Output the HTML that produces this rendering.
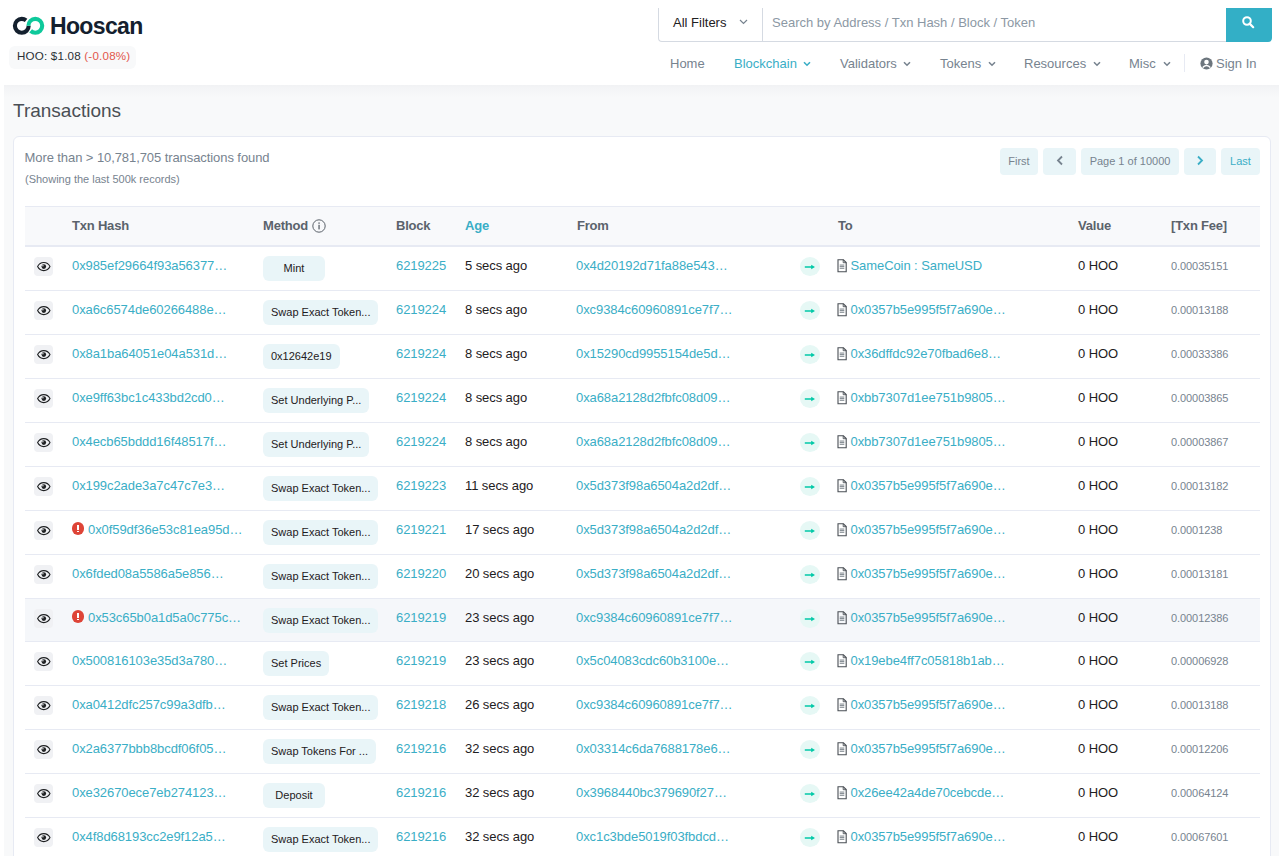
<!DOCTYPE html>
<html><head><meta charset="utf-8">
<style>
*{box-sizing:border-box;margin:0;padding:0}
html,body{width:1287px;height:856px;overflow:hidden;background:#fff}
body{font-family:"Liberation Sans",sans-serif;font-size:13px;color:#1e2022;position:relative}
.abs{position:absolute;white-space:nowrap}
.nav{position:absolute;top:55px;font-size:13px;color:#77838f;line-height:18px;white-space:nowrap}
.chev{display:inline-block;vertical-align:middle}
#main{position:absolute;left:4px;top:85px;width:1275px;height:771px;background:linear-gradient(#f1f2f4 0px,#f3f4f6 3px,#f8f9fa 12px)}
#card{position:absolute;left:13px;top:136px;width:1258px;height:740px;background:#fff;border:1px solid #e7eaf3;border-radius:6px}
.pg{position:absolute;top:147.5px;height:27.5px;background:#e9f5f8;border-radius:4px;font-size:11px;line-height:27px;text-align:center;color:#77838f}
.pg.a{color:#3aaec6}
#thead{position:absolute;left:25px;top:206px;width:1235px;height:41px;background:#f8f9fb;border-top:1px solid #e7eaf3;border-bottom:2px solid #e7eaf3}
.th{position:absolute;top:11px;font-weight:bold;font-size:13px;line-height:16px;color:#5b636c;letter-spacing:-0.2px}
.row{position:absolute;left:25px;width:1235px;height:44px;border-bottom:1px solid #e7eaf3}
.row.hov{background:#f5f7fa}
.c{position:absolute;top:10px;line-height:18px;font-size:13px;white-space:nowrap;letter-spacing:-0.08px}
.lnk{color:#3aaec6}
.eye{position:absolute;left:9px;top:10px;width:19px;height:19px;border-radius:4px;background:#f0f1f4}
.eye svg{position:absolute;left:2.6px;top:5px}
.bdg{position:absolute;left:238px;top:9px;height:25px;min-width:62px;text-align:center;background:#e9f5f8;border-radius:6px;font-size:11px;line-height:25px;padding:0 8px;color:#1e2022}
.arr{position:absolute;left:775px;top:10px;width:20px;height:19px;border-radius:50%;background:#e6f8f5}
.arr svg{position:absolute;left:4px;top:5.6px}
.file{position:absolute;left:812px;top:12px}
.fee{font-size:11px;color:#77838f;top:9.6px}
.err{position:absolute;left:46.5px;top:11px;width:12.8px;height:12.8px;border-radius:50%;background:#de4437}
.err:before{content:"";position:absolute;left:5.3px;top:2.7px;width:2.2px;height:5.8px;background:#fff}
.err:after{content:"";position:absolute;left:5.3px;top:9px;width:2.2px;height:1.4px;background:#fff}
</style></head>
<body>
<!-- logo -->
<svg class="abs" style="left:10px;top:14px" width="38" height="24" viewBox="10 14 38 24">
  <circle cx="21.8" cy="25.8" r="6.9" fill="none" stroke="#14202e" stroke-width="4.1" stroke-dasharray="36.9 100" transform="rotate(0 21.8 25.8)"/>
  <circle cx="35.3" cy="25.8" r="6.9" fill="none" stroke="#0ec99b" stroke-width="4.1" stroke-dasharray="37.4 100" transform="rotate(180 35.3 25.8)"/>
</svg>
<div class="abs" style="left:50px;top:13px;font-size:23px;font-weight:bold;color:#14202e;line-height:26px;letter-spacing:-0.65px">Hooscan</div>
<div class="abs" style="left:9px;top:46px;width:127px;height:23px;background:#f8f9fa;border-radius:6px"></div>
<div class="abs" style="left:17px;top:47px;font-size:11.6px;line-height:18px;color:#2a2f35;letter-spacing:0.2px">HOO: $1.08 <span style="color:#e2574c">(-0.08%)</span></div>

<!-- search -->
<div class="abs" style="left:658px;top:8px;width:570px;height:34px;border-left:1px solid #d5dae2;border-bottom:1px solid #d5dae2;border-bottom-left-radius:4px"></div>
<div class="abs" style="left:762px;top:8px;width:1px;height:33px;background:#d5dae2"></div>
<div class="abs" style="left:673px;top:14px;font-size:13px;line-height:18px;color:#1e2022">All Filters</div>
<svg class="abs" style="left:739px;top:19px" width="9" height="6" viewBox="0 0 9 6"><path d="M1 1l3.5 3.5L8 1" fill="none" stroke="#77838f" stroke-width="1.2"/></svg>
<div class="abs" style="left:772px;top:14px;font-size:13px;line-height:18px;color:#8c98a4">Search by Address / Txn Hash / Block / Token</div>
<div class="abs" style="left:1226px;top:8px;width:46px;height:34px;background:#33afc6;border-radius:0 0 4px 0"></div>
<svg class="abs" style="left:1241px;top:15px" width="14" height="14" viewBox="0 0 14 14"><circle cx="6" cy="6" r="3.8" fill="none" stroke="#fff" stroke-width="2"/><path d="M8.6 8.6L12.2 12.2" stroke="#fff" stroke-width="2.2" stroke-linecap="round"/></svg>

<!-- nav -->
<div class="nav" style="left:670px">Home</div>
<div class="nav" style="left:734px;color:#3aaec6">Blockchain</div>
<svg class="abs" style="left:803px;top:60.8px" width="8" height="6" viewBox="0 0 8 6"><path d="M1 1.2l3 3 3-3" fill="none" stroke="#3aaec6" stroke-width="1.6"/></svg>
<div class="nav" style="left:840px">Validators</div>
<svg class="abs" style="left:903px;top:60.8px" width="8" height="6" viewBox="0 0 8 6"><path d="M1 1.2l3 3 3-3" fill="none" stroke="#77838f" stroke-width="1.6"/></svg>
<div class="nav" style="left:940px">Tokens</div>
<svg class="abs" style="left:988px;top:60.8px" width="8" height="6" viewBox="0 0 8 6"><path d="M1 1.2l3 3 3-3" fill="none" stroke="#77838f" stroke-width="1.6"/></svg>
<div class="nav" style="left:1024px">Resources</div>
<svg class="abs" style="left:1093px;top:60.8px" width="8" height="6" viewBox="0 0 8 6"><path d="M1 1.2l3 3 3-3" fill="none" stroke="#77838f" stroke-width="1.6"/></svg>
<div class="nav" style="left:1129px">Misc</div>
<svg class="abs" style="left:1163px;top:60.8px" width="8" height="6" viewBox="0 0 8 6"><path d="M1 1.2l3 3 3-3" fill="none" stroke="#77838f" stroke-width="1.6"/></svg>
<div class="abs" style="left:1184px;top:54px;width:1px;height:18px;background:#e7eaf3"></div>
<svg class="abs" style="left:1200px;top:56.5px" width="13" height="13" viewBox="0 0 13 13"><circle cx="6.5" cy="6.5" r="6.1" fill="#6c757d"/><circle cx="6.5" cy="5.1" r="2.3" fill="#fff"/><path d="M2.7 10.6c1-1.5 2.3-2.2 3.8-2.2s2.8.7 3.8 2.2" fill="none" stroke="#fff" stroke-width="1.5"/></svg>
<div class="nav" style="left:1216px">Sign In</div>

<!-- main -->
<div id="main"></div>
<div class="abs" style="left:13px;top:99px;font-size:19px;line-height:24px;color:#4a4f55">Transactions</div>
<div id="card"></div>
<div class="abs" style="left:24.5px;top:149px;font-size:13px;line-height:18px;color:#77838f;letter-spacing:-0.08px">More than &gt; 10,781,705 transactions found</div>
<div class="abs" style="left:25px;top:171px;font-size:11px;line-height:16px;color:#77838f">(Showing the last 500k records)</div>

<div class="pg" style="left:1000px;width:38px">First</div>
<div class="pg" style="left:1043px;width:33px"><svg width="8" height="11" viewBox="0 0 8 11" style="vertical-align:-1px"><path d="M6 1.5L2 5.5l4 4" fill="none" stroke="#77838f" stroke-width="1.8"/></svg></div>
<div class="pg" style="left:1081px;width:98px">Page 1 of 10000</div>
<div class="pg a" style="left:1184px;width:32px"><svg width="8" height="11" viewBox="0 0 8 11" style="vertical-align:-1px"><path d="M2 1.5l4 4-4 4" fill="none" stroke="#3aaec6" stroke-width="1.8"/></svg></div>
<div class="pg a" style="left:1221px;width:39px">Last</div>

<div id="thead">
  <div class="th" style="left:47px">Txn Hash</div>
  <div class="th" style="left:238px">Method <svg width="14" height="14" viewBox="0 0 14 14" style="vertical-align:-2.5px;margin-left:1px"><circle cx="7" cy="7" r="6.2" fill="none" stroke="#5a6169" stroke-width="1"/><rect x="6.4" y="5.8" width="1.3" height="4.6" fill="#5a6169"/><rect x="6.4" y="3.4" width="1.3" height="1.4" fill="#5a6169"/></svg></div>
  <div class="th" style="left:371px">Block</div>
  <div class="th" style="left:440px;color:#3aaec6">Age</div>
  <div class="th" style="left:552px">From</div>
  <div class="th" style="left:813px">To</div>
  <div class="th" style="left:1053px">Value</div>
  <div class="th" style="left:1146px">[Txn Fee]</div>
</div>

<div class="row" style="top:247px"><div class="eye"><svg width="14" height="10" viewBox="0 0 14 10"><path d="M0.6 4.6C1.9 2 4.1 0.6 6.8 0.6S11.7 2 13 4.6C11.7 7.2 9.5 8.6 6.8 8.6S1.9 7.2 0.6 4.6z" fill="none" stroke="#1e2022" stroke-width="1.05"/><circle cx="6.8" cy="4.6" r="2.3" fill="#1e2022"/><circle cx="5.9" cy="3.7" r="0.7" fill="#f0f1f4"/></svg></div><div class="c lnk" style="left:47px">0x985ef29664f93a56377…</div><div class="bdg">Mint</div><div class="c lnk" style="left:371px">6219225</div><div class="c" style="left:440px">5 secs ago</div><div class="c lnk" style="left:551px">0x4d20192d71fa88e543…</div><div class="arr"><svg width="12" height="8" viewBox="0 0 12 8"><path d="M0.8 4H8" stroke="#00c9a7" stroke-width="1.5"/><path d="M7.2 1.7L11 4L7.2 6.3z" fill="#00c9a7"/></svg></div><div class="file"><svg width="10" height="14" viewBox="0 0 10 14"><path d="M1 0.8h5.4L9.2 3.6v9.1H1z" fill="none" stroke="#4a4f55" stroke-width="1.1"/><path d="M6.2 0.8v2.9H9.2" fill="none" stroke="#4a4f55" stroke-width="0.9"/><rect x="2.7" y="5.6" width="4.6" height="0.9" fill="#6c757d"/><rect x="2.7" y="7.2" width="4.6" height="0.9" fill="#6c757d"/><rect x="2.7" y="8.8" width="4.6" height="0.9" fill="#6c757d"/></svg></div><div class="c lnk" style="left:825.5px">SameCoin : SameUSD</div><div class="c" style="left:1053px">0 HOO</div><div class="c fee" style="left:1146px">0.00035151</div></div>
<div class="row" style="top:291px"><div class="eye"><svg width="14" height="10" viewBox="0 0 14 10"><path d="M0.6 4.6C1.9 2 4.1 0.6 6.8 0.6S11.7 2 13 4.6C11.7 7.2 9.5 8.6 6.8 8.6S1.9 7.2 0.6 4.6z" fill="none" stroke="#1e2022" stroke-width="1.05"/><circle cx="6.8" cy="4.6" r="2.3" fill="#1e2022"/><circle cx="5.9" cy="3.7" r="0.7" fill="#f0f1f4"/></svg></div><div class="c lnk" style="left:47px">0xa6c6574de60266488e…</div><div class="bdg">Swap Exact Token...</div><div class="c lnk" style="left:371px">6219224</div><div class="c" style="left:440px">8 secs ago</div><div class="c lnk" style="left:551px">0xc9384c60960891ce7f7…</div><div class="arr"><svg width="12" height="8" viewBox="0 0 12 8"><path d="M0.8 4H8" stroke="#00c9a7" stroke-width="1.5"/><path d="M7.2 1.7L11 4L7.2 6.3z" fill="#00c9a7"/></svg></div><div class="file"><svg width="10" height="14" viewBox="0 0 10 14"><path d="M1 0.8h5.4L9.2 3.6v9.1H1z" fill="none" stroke="#4a4f55" stroke-width="1.1"/><path d="M6.2 0.8v2.9H9.2" fill="none" stroke="#4a4f55" stroke-width="0.9"/><rect x="2.7" y="5.6" width="4.6" height="0.9" fill="#6c757d"/><rect x="2.7" y="7.2" width="4.6" height="0.9" fill="#6c757d"/><rect x="2.7" y="8.8" width="4.6" height="0.9" fill="#6c757d"/></svg></div><div class="c lnk" style="left:825.5px">0x0357b5e995f5f7a690e…</div><div class="c" style="left:1053px">0 HOO</div><div class="c fee" style="left:1146px">0.00013188</div></div>
<div class="row" style="top:335px"><div class="eye"><svg width="14" height="10" viewBox="0 0 14 10"><path d="M0.6 4.6C1.9 2 4.1 0.6 6.8 0.6S11.7 2 13 4.6C11.7 7.2 9.5 8.6 6.8 8.6S1.9 7.2 0.6 4.6z" fill="none" stroke="#1e2022" stroke-width="1.05"/><circle cx="6.8" cy="4.6" r="2.3" fill="#1e2022"/><circle cx="5.9" cy="3.7" r="0.7" fill="#f0f1f4"/></svg></div><div class="c lnk" style="left:47px">0x8a1ba64051e04a531d…</div><div class="bdg">0x12642e19</div><div class="c lnk" style="left:371px">6219224</div><div class="c" style="left:440px">8 secs ago</div><div class="c lnk" style="left:551px">0x15290cd9955154de5d…</div><div class="arr"><svg width="12" height="8" viewBox="0 0 12 8"><path d="M0.8 4H8" stroke="#00c9a7" stroke-width="1.5"/><path d="M7.2 1.7L11 4L7.2 6.3z" fill="#00c9a7"/></svg></div><div class="file"><svg width="10" height="14" viewBox="0 0 10 14"><path d="M1 0.8h5.4L9.2 3.6v9.1H1z" fill="none" stroke="#4a4f55" stroke-width="1.1"/><path d="M6.2 0.8v2.9H9.2" fill="none" stroke="#4a4f55" stroke-width="0.9"/><rect x="2.7" y="5.6" width="4.6" height="0.9" fill="#6c757d"/><rect x="2.7" y="7.2" width="4.6" height="0.9" fill="#6c757d"/><rect x="2.7" y="8.8" width="4.6" height="0.9" fill="#6c757d"/></svg></div><div class="c lnk" style="left:825.5px">0x36dffdc92e70fbad6e8…</div><div class="c" style="left:1053px">0 HOO</div><div class="c fee" style="left:1146px">0.00033386</div></div>
<div class="row" style="top:379px"><div class="eye"><svg width="14" height="10" viewBox="0 0 14 10"><path d="M0.6 4.6C1.9 2 4.1 0.6 6.8 0.6S11.7 2 13 4.6C11.7 7.2 9.5 8.6 6.8 8.6S1.9 7.2 0.6 4.6z" fill="none" stroke="#1e2022" stroke-width="1.05"/><circle cx="6.8" cy="4.6" r="2.3" fill="#1e2022"/><circle cx="5.9" cy="3.7" r="0.7" fill="#f0f1f4"/></svg></div><div class="c lnk" style="left:47px">0xe9ff63bc1c433bd2cd0…</div><div class="bdg">Set Underlying P...</div><div class="c lnk" style="left:371px">6219224</div><div class="c" style="left:440px">8 secs ago</div><div class="c lnk" style="left:551px">0xa68a2128d2fbfc08d09…</div><div class="arr"><svg width="12" height="8" viewBox="0 0 12 8"><path d="M0.8 4H8" stroke="#00c9a7" stroke-width="1.5"/><path d="M7.2 1.7L11 4L7.2 6.3z" fill="#00c9a7"/></svg></div><div class="file"><svg width="10" height="14" viewBox="0 0 10 14"><path d="M1 0.8h5.4L9.2 3.6v9.1H1z" fill="none" stroke="#4a4f55" stroke-width="1.1"/><path d="M6.2 0.8v2.9H9.2" fill="none" stroke="#4a4f55" stroke-width="0.9"/><rect x="2.7" y="5.6" width="4.6" height="0.9" fill="#6c757d"/><rect x="2.7" y="7.2" width="4.6" height="0.9" fill="#6c757d"/><rect x="2.7" y="8.8" width="4.6" height="0.9" fill="#6c757d"/></svg></div><div class="c lnk" style="left:825.5px">0xbb7307d1ee751b9805…</div><div class="c" style="left:1053px">0 HOO</div><div class="c fee" style="left:1146px">0.00003865</div></div>
<div class="row" style="top:423px"><div class="eye"><svg width="14" height="10" viewBox="0 0 14 10"><path d="M0.6 4.6C1.9 2 4.1 0.6 6.8 0.6S11.7 2 13 4.6C11.7 7.2 9.5 8.6 6.8 8.6S1.9 7.2 0.6 4.6z" fill="none" stroke="#1e2022" stroke-width="1.05"/><circle cx="6.8" cy="4.6" r="2.3" fill="#1e2022"/><circle cx="5.9" cy="3.7" r="0.7" fill="#f0f1f4"/></svg></div><div class="c lnk" style="left:47px">0x4ecb65bddd16f48517f…</div><div class="bdg">Set Underlying P...</div><div class="c lnk" style="left:371px">6219224</div><div class="c" style="left:440px">8 secs ago</div><div class="c lnk" style="left:551px">0xa68a2128d2fbfc08d09…</div><div class="arr"><svg width="12" height="8" viewBox="0 0 12 8"><path d="M0.8 4H8" stroke="#00c9a7" stroke-width="1.5"/><path d="M7.2 1.7L11 4L7.2 6.3z" fill="#00c9a7"/></svg></div><div class="file"><svg width="10" height="14" viewBox="0 0 10 14"><path d="M1 0.8h5.4L9.2 3.6v9.1H1z" fill="none" stroke="#4a4f55" stroke-width="1.1"/><path d="M6.2 0.8v2.9H9.2" fill="none" stroke="#4a4f55" stroke-width="0.9"/><rect x="2.7" y="5.6" width="4.6" height="0.9" fill="#6c757d"/><rect x="2.7" y="7.2" width="4.6" height="0.9" fill="#6c757d"/><rect x="2.7" y="8.8" width="4.6" height="0.9" fill="#6c757d"/></svg></div><div class="c lnk" style="left:825.5px">0xbb7307d1ee751b9805…</div><div class="c" style="left:1053px">0 HOO</div><div class="c fee" style="left:1146px">0.00003867</div></div>
<div class="row" style="top:467px"><div class="eye"><svg width="14" height="10" viewBox="0 0 14 10"><path d="M0.6 4.6C1.9 2 4.1 0.6 6.8 0.6S11.7 2 13 4.6C11.7 7.2 9.5 8.6 6.8 8.6S1.9 7.2 0.6 4.6z" fill="none" stroke="#1e2022" stroke-width="1.05"/><circle cx="6.8" cy="4.6" r="2.3" fill="#1e2022"/><circle cx="5.9" cy="3.7" r="0.7" fill="#f0f1f4"/></svg></div><div class="c lnk" style="left:47px">0x199c2ade3a7c47c7e3…</div><div class="bdg">Swap Exact Token...</div><div class="c lnk" style="left:371px">6219223</div><div class="c" style="left:440px">11 secs ago</div><div class="c lnk" style="left:551px">0x5d373f98a6504a2d2df…</div><div class="arr"><svg width="12" height="8" viewBox="0 0 12 8"><path d="M0.8 4H8" stroke="#00c9a7" stroke-width="1.5"/><path d="M7.2 1.7L11 4L7.2 6.3z" fill="#00c9a7"/></svg></div><div class="file"><svg width="10" height="14" viewBox="0 0 10 14"><path d="M1 0.8h5.4L9.2 3.6v9.1H1z" fill="none" stroke="#4a4f55" stroke-width="1.1"/><path d="M6.2 0.8v2.9H9.2" fill="none" stroke="#4a4f55" stroke-width="0.9"/><rect x="2.7" y="5.6" width="4.6" height="0.9" fill="#6c757d"/><rect x="2.7" y="7.2" width="4.6" height="0.9" fill="#6c757d"/><rect x="2.7" y="8.8" width="4.6" height="0.9" fill="#6c757d"/></svg></div><div class="c lnk" style="left:825.5px">0x0357b5e995f5f7a690e…</div><div class="c" style="left:1053px">0 HOO</div><div class="c fee" style="left:1146px">0.00013182</div></div>
<div class="row" style="top:511px"><div class="eye"><svg width="14" height="10" viewBox="0 0 14 10"><path d="M0.6 4.6C1.9 2 4.1 0.6 6.8 0.6S11.7 2 13 4.6C11.7 7.2 9.5 8.6 6.8 8.6S1.9 7.2 0.6 4.6z" fill="none" stroke="#1e2022" stroke-width="1.05"/><circle cx="6.8" cy="4.6" r="2.3" fill="#1e2022"/><circle cx="5.9" cy="3.7" r="0.7" fill="#f0f1f4"/></svg></div><div class="err"></div><div class="c lnk" style="left:63px">0x0f59df36e53c81ea95d…</div><div class="bdg">Swap Exact Token...</div><div class="c lnk" style="left:371px">6219221</div><div class="c" style="left:440px">17 secs ago</div><div class="c lnk" style="left:551px">0x5d373f98a6504a2d2df…</div><div class="arr"><svg width="12" height="8" viewBox="0 0 12 8"><path d="M0.8 4H8" stroke="#00c9a7" stroke-width="1.5"/><path d="M7.2 1.7L11 4L7.2 6.3z" fill="#00c9a7"/></svg></div><div class="file"><svg width="10" height="14" viewBox="0 0 10 14"><path d="M1 0.8h5.4L9.2 3.6v9.1H1z" fill="none" stroke="#4a4f55" stroke-width="1.1"/><path d="M6.2 0.8v2.9H9.2" fill="none" stroke="#4a4f55" stroke-width="0.9"/><rect x="2.7" y="5.6" width="4.6" height="0.9" fill="#6c757d"/><rect x="2.7" y="7.2" width="4.6" height="0.9" fill="#6c757d"/><rect x="2.7" y="8.8" width="4.6" height="0.9" fill="#6c757d"/></svg></div><div class="c lnk" style="left:825.5px">0x0357b5e995f5f7a690e…</div><div class="c" style="left:1053px">0 HOO</div><div class="c fee" style="left:1146px">0.0001238</div></div>
<div class="row" style="top:555px"><div class="eye"><svg width="14" height="10" viewBox="0 0 14 10"><path d="M0.6 4.6C1.9 2 4.1 0.6 6.8 0.6S11.7 2 13 4.6C11.7 7.2 9.5 8.6 6.8 8.6S1.9 7.2 0.6 4.6z" fill="none" stroke="#1e2022" stroke-width="1.05"/><circle cx="6.8" cy="4.6" r="2.3" fill="#1e2022"/><circle cx="5.9" cy="3.7" r="0.7" fill="#f0f1f4"/></svg></div><div class="c lnk" style="left:47px">0x6fded08a5586a5e856…</div><div class="bdg">Swap Exact Token...</div><div class="c lnk" style="left:371px">6219220</div><div class="c" style="left:440px">20 secs ago</div><div class="c lnk" style="left:551px">0x5d373f98a6504a2d2df…</div><div class="arr"><svg width="12" height="8" viewBox="0 0 12 8"><path d="M0.8 4H8" stroke="#00c9a7" stroke-width="1.5"/><path d="M7.2 1.7L11 4L7.2 6.3z" fill="#00c9a7"/></svg></div><div class="file"><svg width="10" height="14" viewBox="0 0 10 14"><path d="M1 0.8h5.4L9.2 3.6v9.1H1z" fill="none" stroke="#4a4f55" stroke-width="1.1"/><path d="M6.2 0.8v2.9H9.2" fill="none" stroke="#4a4f55" stroke-width="0.9"/><rect x="2.7" y="5.6" width="4.6" height="0.9" fill="#6c757d"/><rect x="2.7" y="7.2" width="4.6" height="0.9" fill="#6c757d"/><rect x="2.7" y="8.8" width="4.6" height="0.9" fill="#6c757d"/></svg></div><div class="c lnk" style="left:825.5px">0x0357b5e995f5f7a690e…</div><div class="c" style="left:1053px">0 HOO</div><div class="c fee" style="left:1146px">0.00013181</div></div>
<div class="row hov" style="top:599px;height:43px"><div class="eye"><svg width="14" height="10" viewBox="0 0 14 10"><path d="M0.6 4.6C1.9 2 4.1 0.6 6.8 0.6S11.7 2 13 4.6C11.7 7.2 9.5 8.6 6.8 8.6S1.9 7.2 0.6 4.6z" fill="none" stroke="#1e2022" stroke-width="1.05"/><circle cx="6.8" cy="4.6" r="2.3" fill="#1e2022"/><circle cx="5.9" cy="3.7" r="0.7" fill="#f0f1f4"/></svg></div><div class="err"></div><div class="c lnk" style="left:63px">0x53c65b0a1d5a0c775c…</div><div class="bdg">Swap Exact Token...</div><div class="c lnk" style="left:371px">6219219</div><div class="c" style="left:440px">23 secs ago</div><div class="c lnk" style="left:551px">0xc9384c60960891ce7f7…</div><div class="arr"><svg width="12" height="8" viewBox="0 0 12 8"><path d="M0.8 4H8" stroke="#00c9a7" stroke-width="1.5"/><path d="M7.2 1.7L11 4L7.2 6.3z" fill="#00c9a7"/></svg></div><div class="file"><svg width="10" height="14" viewBox="0 0 10 14"><path d="M1 0.8h5.4L9.2 3.6v9.1H1z" fill="none" stroke="#4a4f55" stroke-width="1.1"/><path d="M6.2 0.8v2.9H9.2" fill="none" stroke="#4a4f55" stroke-width="0.9"/><rect x="2.7" y="5.6" width="4.6" height="0.9" fill="#6c757d"/><rect x="2.7" y="7.2" width="4.6" height="0.9" fill="#6c757d"/><rect x="2.7" y="8.8" width="4.6" height="0.9" fill="#6c757d"/></svg></div><div class="c lnk" style="left:825.5px">0x0357b5e995f5f7a690e…</div><div class="c" style="left:1053px">0 HOO</div><div class="c fee" style="left:1146px">0.00012386</div></div>
<div class="row" style="top:642px"><div class="eye"><svg width="14" height="10" viewBox="0 0 14 10"><path d="M0.6 4.6C1.9 2 4.1 0.6 6.8 0.6S11.7 2 13 4.6C11.7 7.2 9.5 8.6 6.8 8.6S1.9 7.2 0.6 4.6z" fill="none" stroke="#1e2022" stroke-width="1.05"/><circle cx="6.8" cy="4.6" r="2.3" fill="#1e2022"/><circle cx="5.9" cy="3.7" r="0.7" fill="#f0f1f4"/></svg></div><div class="c lnk" style="left:47px">0x500816103e35d3a780…</div><div class="bdg">Set Prices</div><div class="c lnk" style="left:371px">6219219</div><div class="c" style="left:440px">23 secs ago</div><div class="c lnk" style="left:551px">0x5c04083cdc60b3100e…</div><div class="arr"><svg width="12" height="8" viewBox="0 0 12 8"><path d="M0.8 4H8" stroke="#00c9a7" stroke-width="1.5"/><path d="M7.2 1.7L11 4L7.2 6.3z" fill="#00c9a7"/></svg></div><div class="file"><svg width="10" height="14" viewBox="0 0 10 14"><path d="M1 0.8h5.4L9.2 3.6v9.1H1z" fill="none" stroke="#4a4f55" stroke-width="1.1"/><path d="M6.2 0.8v2.9H9.2" fill="none" stroke="#4a4f55" stroke-width="0.9"/><rect x="2.7" y="5.6" width="4.6" height="0.9" fill="#6c757d"/><rect x="2.7" y="7.2" width="4.6" height="0.9" fill="#6c757d"/><rect x="2.7" y="8.8" width="4.6" height="0.9" fill="#6c757d"/></svg></div><div class="c lnk" style="left:825.5px">0x19ebe4ff7c05818b1ab…</div><div class="c" style="left:1053px">0 HOO</div><div class="c fee" style="left:1146px">0.00006928</div></div>
<div class="row" style="top:686px"><div class="eye"><svg width="14" height="10" viewBox="0 0 14 10"><path d="M0.6 4.6C1.9 2 4.1 0.6 6.8 0.6S11.7 2 13 4.6C11.7 7.2 9.5 8.6 6.8 8.6S1.9 7.2 0.6 4.6z" fill="none" stroke="#1e2022" stroke-width="1.05"/><circle cx="6.8" cy="4.6" r="2.3" fill="#1e2022"/><circle cx="5.9" cy="3.7" r="0.7" fill="#f0f1f4"/></svg></div><div class="c lnk" style="left:47px">0xa0412dfc257c99a3dfb…</div><div class="bdg">Swap Exact Token...</div><div class="c lnk" style="left:371px">6219218</div><div class="c" style="left:440px">26 secs ago</div><div class="c lnk" style="left:551px">0xc9384c60960891ce7f7…</div><div class="arr"><svg width="12" height="8" viewBox="0 0 12 8"><path d="M0.8 4H8" stroke="#00c9a7" stroke-width="1.5"/><path d="M7.2 1.7L11 4L7.2 6.3z" fill="#00c9a7"/></svg></div><div class="file"><svg width="10" height="14" viewBox="0 0 10 14"><path d="M1 0.8h5.4L9.2 3.6v9.1H1z" fill="none" stroke="#4a4f55" stroke-width="1.1"/><path d="M6.2 0.8v2.9H9.2" fill="none" stroke="#4a4f55" stroke-width="0.9"/><rect x="2.7" y="5.6" width="4.6" height="0.9" fill="#6c757d"/><rect x="2.7" y="7.2" width="4.6" height="0.9" fill="#6c757d"/><rect x="2.7" y="8.8" width="4.6" height="0.9" fill="#6c757d"/></svg></div><div class="c lnk" style="left:825.5px">0x0357b5e995f5f7a690e…</div><div class="c" style="left:1053px">0 HOO</div><div class="c fee" style="left:1146px">0.00013188</div></div>
<div class="row" style="top:730px"><div class="eye"><svg width="14" height="10" viewBox="0 0 14 10"><path d="M0.6 4.6C1.9 2 4.1 0.6 6.8 0.6S11.7 2 13 4.6C11.7 7.2 9.5 8.6 6.8 8.6S1.9 7.2 0.6 4.6z" fill="none" stroke="#1e2022" stroke-width="1.05"/><circle cx="6.8" cy="4.6" r="2.3" fill="#1e2022"/><circle cx="5.9" cy="3.7" r="0.7" fill="#f0f1f4"/></svg></div><div class="c lnk" style="left:47px">0x2a6377bbb8bcdf06f05…</div><div class="bdg">Swap Tokens For ...</div><div class="c lnk" style="left:371px">6219216</div><div class="c" style="left:440px">32 secs ago</div><div class="c lnk" style="left:551px">0x03314c6da7688178e6…</div><div class="arr"><svg width="12" height="8" viewBox="0 0 12 8"><path d="M0.8 4H8" stroke="#00c9a7" stroke-width="1.5"/><path d="M7.2 1.7L11 4L7.2 6.3z" fill="#00c9a7"/></svg></div><div class="file"><svg width="10" height="14" viewBox="0 0 10 14"><path d="M1 0.8h5.4L9.2 3.6v9.1H1z" fill="none" stroke="#4a4f55" stroke-width="1.1"/><path d="M6.2 0.8v2.9H9.2" fill="none" stroke="#4a4f55" stroke-width="0.9"/><rect x="2.7" y="5.6" width="4.6" height="0.9" fill="#6c757d"/><rect x="2.7" y="7.2" width="4.6" height="0.9" fill="#6c757d"/><rect x="2.7" y="8.8" width="4.6" height="0.9" fill="#6c757d"/></svg></div><div class="c lnk" style="left:825.5px">0x0357b5e995f5f7a690e…</div><div class="c" style="left:1053px">0 HOO</div><div class="c fee" style="left:1146px">0.00012206</div></div>
<div class="row" style="top:774px"><div class="eye"><svg width="14" height="10" viewBox="0 0 14 10"><path d="M0.6 4.6C1.9 2 4.1 0.6 6.8 0.6S11.7 2 13 4.6C11.7 7.2 9.5 8.6 6.8 8.6S1.9 7.2 0.6 4.6z" fill="none" stroke="#1e2022" stroke-width="1.05"/><circle cx="6.8" cy="4.6" r="2.3" fill="#1e2022"/><circle cx="5.9" cy="3.7" r="0.7" fill="#f0f1f4"/></svg></div><div class="c lnk" style="left:47px">0xe32670ece7eb274123…</div><div class="bdg">Deposit</div><div class="c lnk" style="left:371px">6219216</div><div class="c" style="left:440px">32 secs ago</div><div class="c lnk" style="left:551px">0x3968440bc379690f27…</div><div class="arr"><svg width="12" height="8" viewBox="0 0 12 8"><path d="M0.8 4H8" stroke="#00c9a7" stroke-width="1.5"/><path d="M7.2 1.7L11 4L7.2 6.3z" fill="#00c9a7"/></svg></div><div class="file"><svg width="10" height="14" viewBox="0 0 10 14"><path d="M1 0.8h5.4L9.2 3.6v9.1H1z" fill="none" stroke="#4a4f55" stroke-width="1.1"/><path d="M6.2 0.8v2.9H9.2" fill="none" stroke="#4a4f55" stroke-width="0.9"/><rect x="2.7" y="5.6" width="4.6" height="0.9" fill="#6c757d"/><rect x="2.7" y="7.2" width="4.6" height="0.9" fill="#6c757d"/><rect x="2.7" y="8.8" width="4.6" height="0.9" fill="#6c757d"/></svg></div><div class="c lnk" style="left:825.5px">0x26ee42a4de70cebcde…</div><div class="c" style="left:1053px">0 HOO</div><div class="c fee" style="left:1146px">0.00064124</div></div>
<div class="row" style="top:818px"><div class="eye"><svg width="14" height="10" viewBox="0 0 14 10"><path d="M0.6 4.6C1.9 2 4.1 0.6 6.8 0.6S11.7 2 13 4.6C11.7 7.2 9.5 8.6 6.8 8.6S1.9 7.2 0.6 4.6z" fill="none" stroke="#1e2022" stroke-width="1.05"/><circle cx="6.8" cy="4.6" r="2.3" fill="#1e2022"/><circle cx="5.9" cy="3.7" r="0.7" fill="#f0f1f4"/></svg></div><div class="c lnk" style="left:47px">0x4f8d68193cc2e9f12a5…</div><div class="bdg">Swap Exact Token...</div><div class="c lnk" style="left:371px">6219216</div><div class="c" style="left:440px">32 secs ago</div><div class="c lnk" style="left:551px">0xc1c3bde5019f03fbdcd…</div><div class="arr"><svg width="12" height="8" viewBox="0 0 12 8"><path d="M0.8 4H8" stroke="#00c9a7" stroke-width="1.5"/><path d="M7.2 1.7L11 4L7.2 6.3z" fill="#00c9a7"/></svg></div><div class="file"><svg width="10" height="14" viewBox="0 0 10 14"><path d="M1 0.8h5.4L9.2 3.6v9.1H1z" fill="none" stroke="#4a4f55" stroke-width="1.1"/><path d="M6.2 0.8v2.9H9.2" fill="none" stroke="#4a4f55" stroke-width="0.9"/><rect x="2.7" y="5.6" width="4.6" height="0.9" fill="#6c757d"/><rect x="2.7" y="7.2" width="4.6" height="0.9" fill="#6c757d"/><rect x="2.7" y="8.8" width="4.6" height="0.9" fill="#6c757d"/></svg></div><div class="c lnk" style="left:825.5px">0x0357b5e995f5f7a690e…</div><div class="c" style="left:1053px">0 HOO</div><div class="c fee" style="left:1146px">0.00067601</div></div>
</body></html>
